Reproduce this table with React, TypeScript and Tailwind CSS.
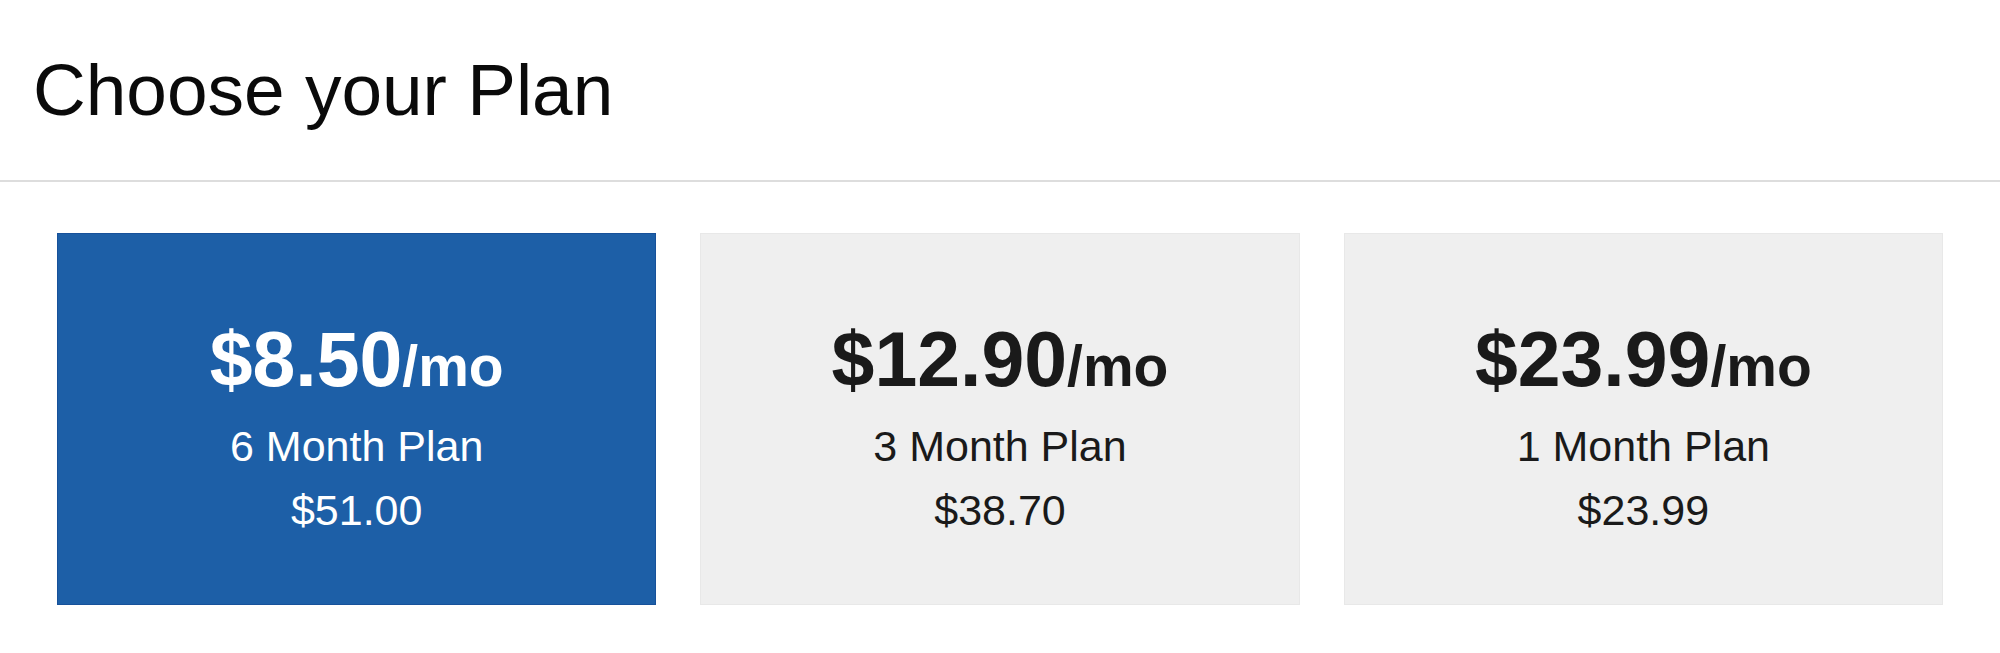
const plans = [
  { price: '$8.50', name: '6 Month Plan', total: '$51.00', active: true },
  { price: '$12.90', name: '3 Month Plan', total: '$38.70', active: false },
  { price: '$23.99', name: '1 Month Plan', total: '$23.99', active: false },
]

export default function App() {
  return (
    <main className="min-h-screen bg-white font-['Liberation_Sans',Arial,sans-serif] text-[#111]">
      <header className="h-[180px] pl-[33px] pt-[54px]">
        <h1 className="text-[73px] font-normal leading-[72px] text-[#0a0a0a]">Choose your Plan</h1>
      </header>
      <div className="h-[2px] w-full bg-[#dddddd]" />

      <section className="grid grid-cols-3 gap-[44px] px-[57px] pt-[51px]">
        {plans.map((plan) => (
          <article
            key={plan.name}
            className={
              plan.active
                ? 'flex h-[372px] flex-col items-center border border-[#17519a] bg-[#1d5fa7] pt-[77px] text-white'
                : 'flex h-[372px] flex-col items-center border border-[#e8e8e8] bg-[#efefef] pt-[77px] text-[#1a1a1a]'
            }
          >
            <div className="text-[77px] font-bold leading-[96px]">
              {plan.price}
              <span className="text-[57px]">/mo</span>
            </div>
            <p className="text-[43px] leading-[64px]">{plan.name}</p>
            <p className="text-[43px] leading-[64px]">{plan.total}</p>
          </article>
        ))}
      </section>
    </main>
  )
}
